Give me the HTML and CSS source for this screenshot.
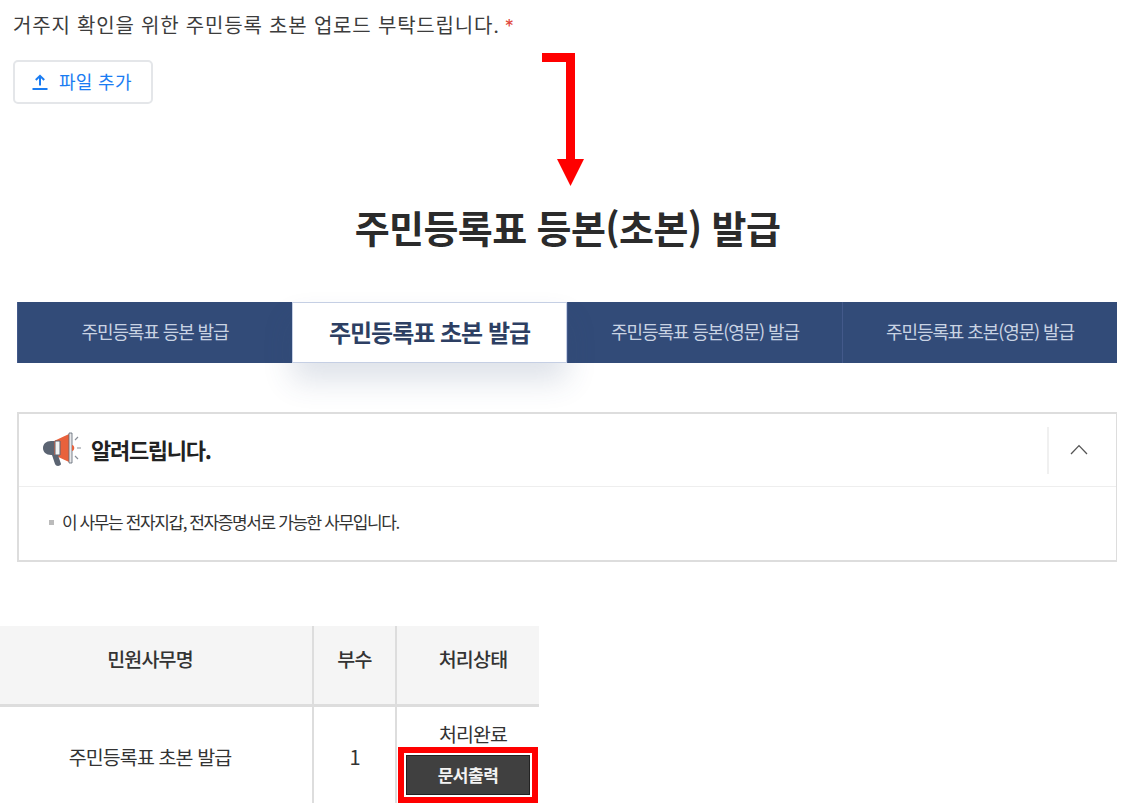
FILE: index.html
```html
<!DOCTYPE html>
<html lang="ko">

<head>
    <meta charset="UTF-8">
    <meta name="viewport" content="width=device-width, initial-scale=1.0">
    <link rel="stylesheet" href="styles.css">
    <title>주민등록표 등본(초본) 발급</title>
</head>

<body>
    <div class="upload">
        <p class="upload-label">거주지 확인을 위한 주민등록 초본 업로드 부탁드립니다.<span class="req">*</span></p>
        <button class="upload-btn" type="button">
            <svg width="18" height="18" viewBox="0 0 18 18" fill="none" stroke="#1a7cf2" stroke-width="2">
                <path d="M9 12.5V3M4.8 7 9 2.8 13.2 7M1.5 16h15" />
            </svg>
            파일 추가
        </button>
    </div>

    <svg class="arrow" width="44" height="135" viewBox="0 0 44 135" fill="#ff0000">
        <path d="M0 0H33V106H42L28.5 133 15 106H24V9H0Z" />
    </svg>

    <h1 class="title">주민등록표 등본(초본) 발급</h1>

    <ul class="tabs">
        <li>주민등록표 등본 발급</li>
        <li class="active">주민등록표 초본 발급</li>
        <li>주민등록표 등본(영문) 발급</li>
        <li>주민등록표 초본(영문) 발급</li>
    </ul>

    <section class="notice">
        <div class="notice-head">
            <svg class="notice-icon" width="40" height="36" viewBox="0 0 40 36">
                <path d="M9 10H13V24H9C4 24 1 21 1 17S4 10 9 10Z" fill="#5b6472" />
                <path d="M12 10 27 3V31L12 24Z" fill="#e8613c" />
                <path d="M13 10H18V24H13Z" fill="#f3f3f3" stroke="#5b6472" />
                <path d="M27 2H30V32H27Z" fill="#e8e8ea" stroke="#5b6472" stroke-width=".8" />
                <path d="M10 24H16L19 33C19 35 14 36 13 33Z" fill="#5b6472" />
                <path d="M30 14C33 14 33 20 30 20Z" fill="#e8613c" />
                <path d="M33 9 36 6M35 17H39M33 25 36 28" stroke="#8a8f98" stroke-width="1.2" fill="none" />
            </svg>
            <h2>알려드립니다.</h2>
            <div class="notice-toggle">
                <svg width="18" height="11" viewBox="0 0 18 11" fill="none" stroke="#555" stroke-width="1.3">
                    <path d="M1 10 9 1.6l8 8.4" />
                </svg>
            </div>
        </div>
        <div class="notice-body">
            <p>이 사무는 전자지갑, 전자증명서로 가능한 사무입니다.</p>
        </div>
    </section>

    <table class="result">
        <thead>
            <tr>
                <th class="col-name">민원사무명</th>
                <th class="col-count">부수</th>
                <th class="col-state">처리상태</th>
            </tr>
        </thead>
        <tbody>
            <tr>
                <td class="name">주민등록표 초본 발급</td>
                <td class="count">1</td>
                <td class="state">
                    <div class="state-text">처리완료</div>
                    <div class="print-mark"><span class="print-btn">문서출력</span></div>
                </td>
            </tr>
        </tbody>
    </table>
</body>

</html>
```

FILE: styles.css
```css
* {
    margin: 0;
    padding: 0;
    box-sizing: border-box;
}

ul {
    list-style: none;
}

html,
body {
    height: 803px;
    overflow: hidden;
}

body {
    position: relative;
    background-color: #fff;
    color: #333;
    font-family: "Noto Sans CJK KR", "Noto Sans", sans-serif;
}

/* upload */
.upload {
    padding: 11px 0 0 13px;
}

.upload-label {
    font-size: 20px;
    line-height: 30px;
    letter-spacing: 0.8px;
    color: #3c3c3c;
    font-family: "Inter", "Noto Sans CJK KR", sans-serif;
}

.req {
    margin-left: 5px;
    color: #e0453a;
    font-size: 18px;
}

.upload-btn {
    display: flex;
    align-items: center;
    gap: 10px;
    width: 140px;
    height: 44px;
    margin-top: 18px;
    padding: 0 0 3px 16px;
    background-color: #fff;
    border: 2px solid #e4e6e9;
    border-radius: 5px;
    color: #1a7cf2;
    font-family: inherit;
    font-size: 18px;
    letter-spacing: 0.3px;
}

.upload-btn svg {
    margin-top: 3px;
}

/* red arrow drawn over the page */
.arrow {
    position: absolute;
    top: 53px;
    left: 542px;
}

.title {
    margin-top: 97px;
    padding-right: 4px;
    text-align: center;
    font-size: 38px;
    line-height: 52px;
    font-weight: 700;
    color: #2b2b2b;
    letter-spacing: -0.6px;
}

/* tabs */
.tabs {
    display: grid;
    grid-template-columns: repeat(4, 1fr);
    height: 61px;
    margin: 49px 22px 0 17px;
    background-color: #324b78;
}

.tabs li {
    display: flex;
    align-items: center;
    justify-content: center;
    padding-bottom: 3px;
    color: #c9d3e3;
    font-size: 18px;
    letter-spacing: -1.1px;
    border-left: 1px solid #43598a;
}

.tabs li.active {
    background-color: #fff;
    color: #2d3f63;
    font-size: 24px;
    font-weight: 700;
    letter-spacing: -1px;
    border: 1px solid #c5cfe4;
    box-shadow: 0 18px 30px rgba(50, 75, 120, 0.16);
}

/* notice */
.notice {
    margin: 49px 22px 0 17px;
    height: 150px;
    border: 2px solid #ddd;
    border-right-width: 1px;
}

.notice-head {
    display: flex;
    align-items: center;
    height: 73px;
    padding: 0 0 3px 23px;
    border-bottom: 1px solid #eee;
}

.notice-head h2 {
    margin-left: 9px;
    font-size: 22px;
    font-weight: 700;
    letter-spacing: -1.3px;
    color: #222;
}

.notice-toggle {
    display: flex;
    align-items: center;
    justify-content: center;
    width: 69px;
    height: 47px;
    margin: 3px 0 0 auto;
    padding-right: 7px;
    border-left: 2px solid #f0f0f0;
}

.notice-toggle svg {
    margin-bottom: 2px;
}

.notice-body {
    padding: 22px 0 0 30px;
}

.notice-body p {
    display: flex;
    align-items: center;
    font-size: 17px;
    line-height: 26px;
    letter-spacing: -1.4px;
    color: #333;
}

.notice-body p::before {
    content: "";
    width: 5px;
    height: 5px;
    margin-right: 8px;
    background-color: #bbb;
}

/* result table */
.result {
    width: 539px;
    margin-top: 64px;
    border-collapse: collapse;
    table-layout: fixed;
    font-size: 19.5px;
    color: #333;
}

.result th {
    height: 79px;
    padding-bottom: 12px;
    background-color: #f5f5f5;
    font-weight: 500;
    letter-spacing: -0.8px;
    border-bottom: 3px solid #ddd;
}

.result td {
    height: 100px;
    padding-top: 2px;
    text-align: center;
    letter-spacing: -0.9px;
}

.result th+th,
.result td+td {
    border-left: 2px solid #ddd;
}

.col-name {
    width: 313px;
}

.col-count {
    width: 83px;
}

.result .col-name,
.result .name {
    padding-right: 12px;
}

.result .col-state {
    padding-left: 10px;
}

.count {
    font-size: 20px;
}

.result .state {
    vertical-align: top;
    padding-top: 13px;
}

.state-text {
    line-height: 27px;
    padding-left: 10px;
}

.print-mark {
    width: 140px;
    height: 56px;
    margin: 0 0 0 1px;
    padding: 2px;
    background-color: #fff;
    border: 6px solid #ff0000;
}

.print-btn {
    display: flex;
    align-items: center;
    justify-content: center;
    height: 100%;
    background-color: #404040;
    border: 1px solid #222;
    color: #f3f3f3;
    font-size: 17px;
    font-weight: 700;
    letter-spacing: -0.5px;
}
```
